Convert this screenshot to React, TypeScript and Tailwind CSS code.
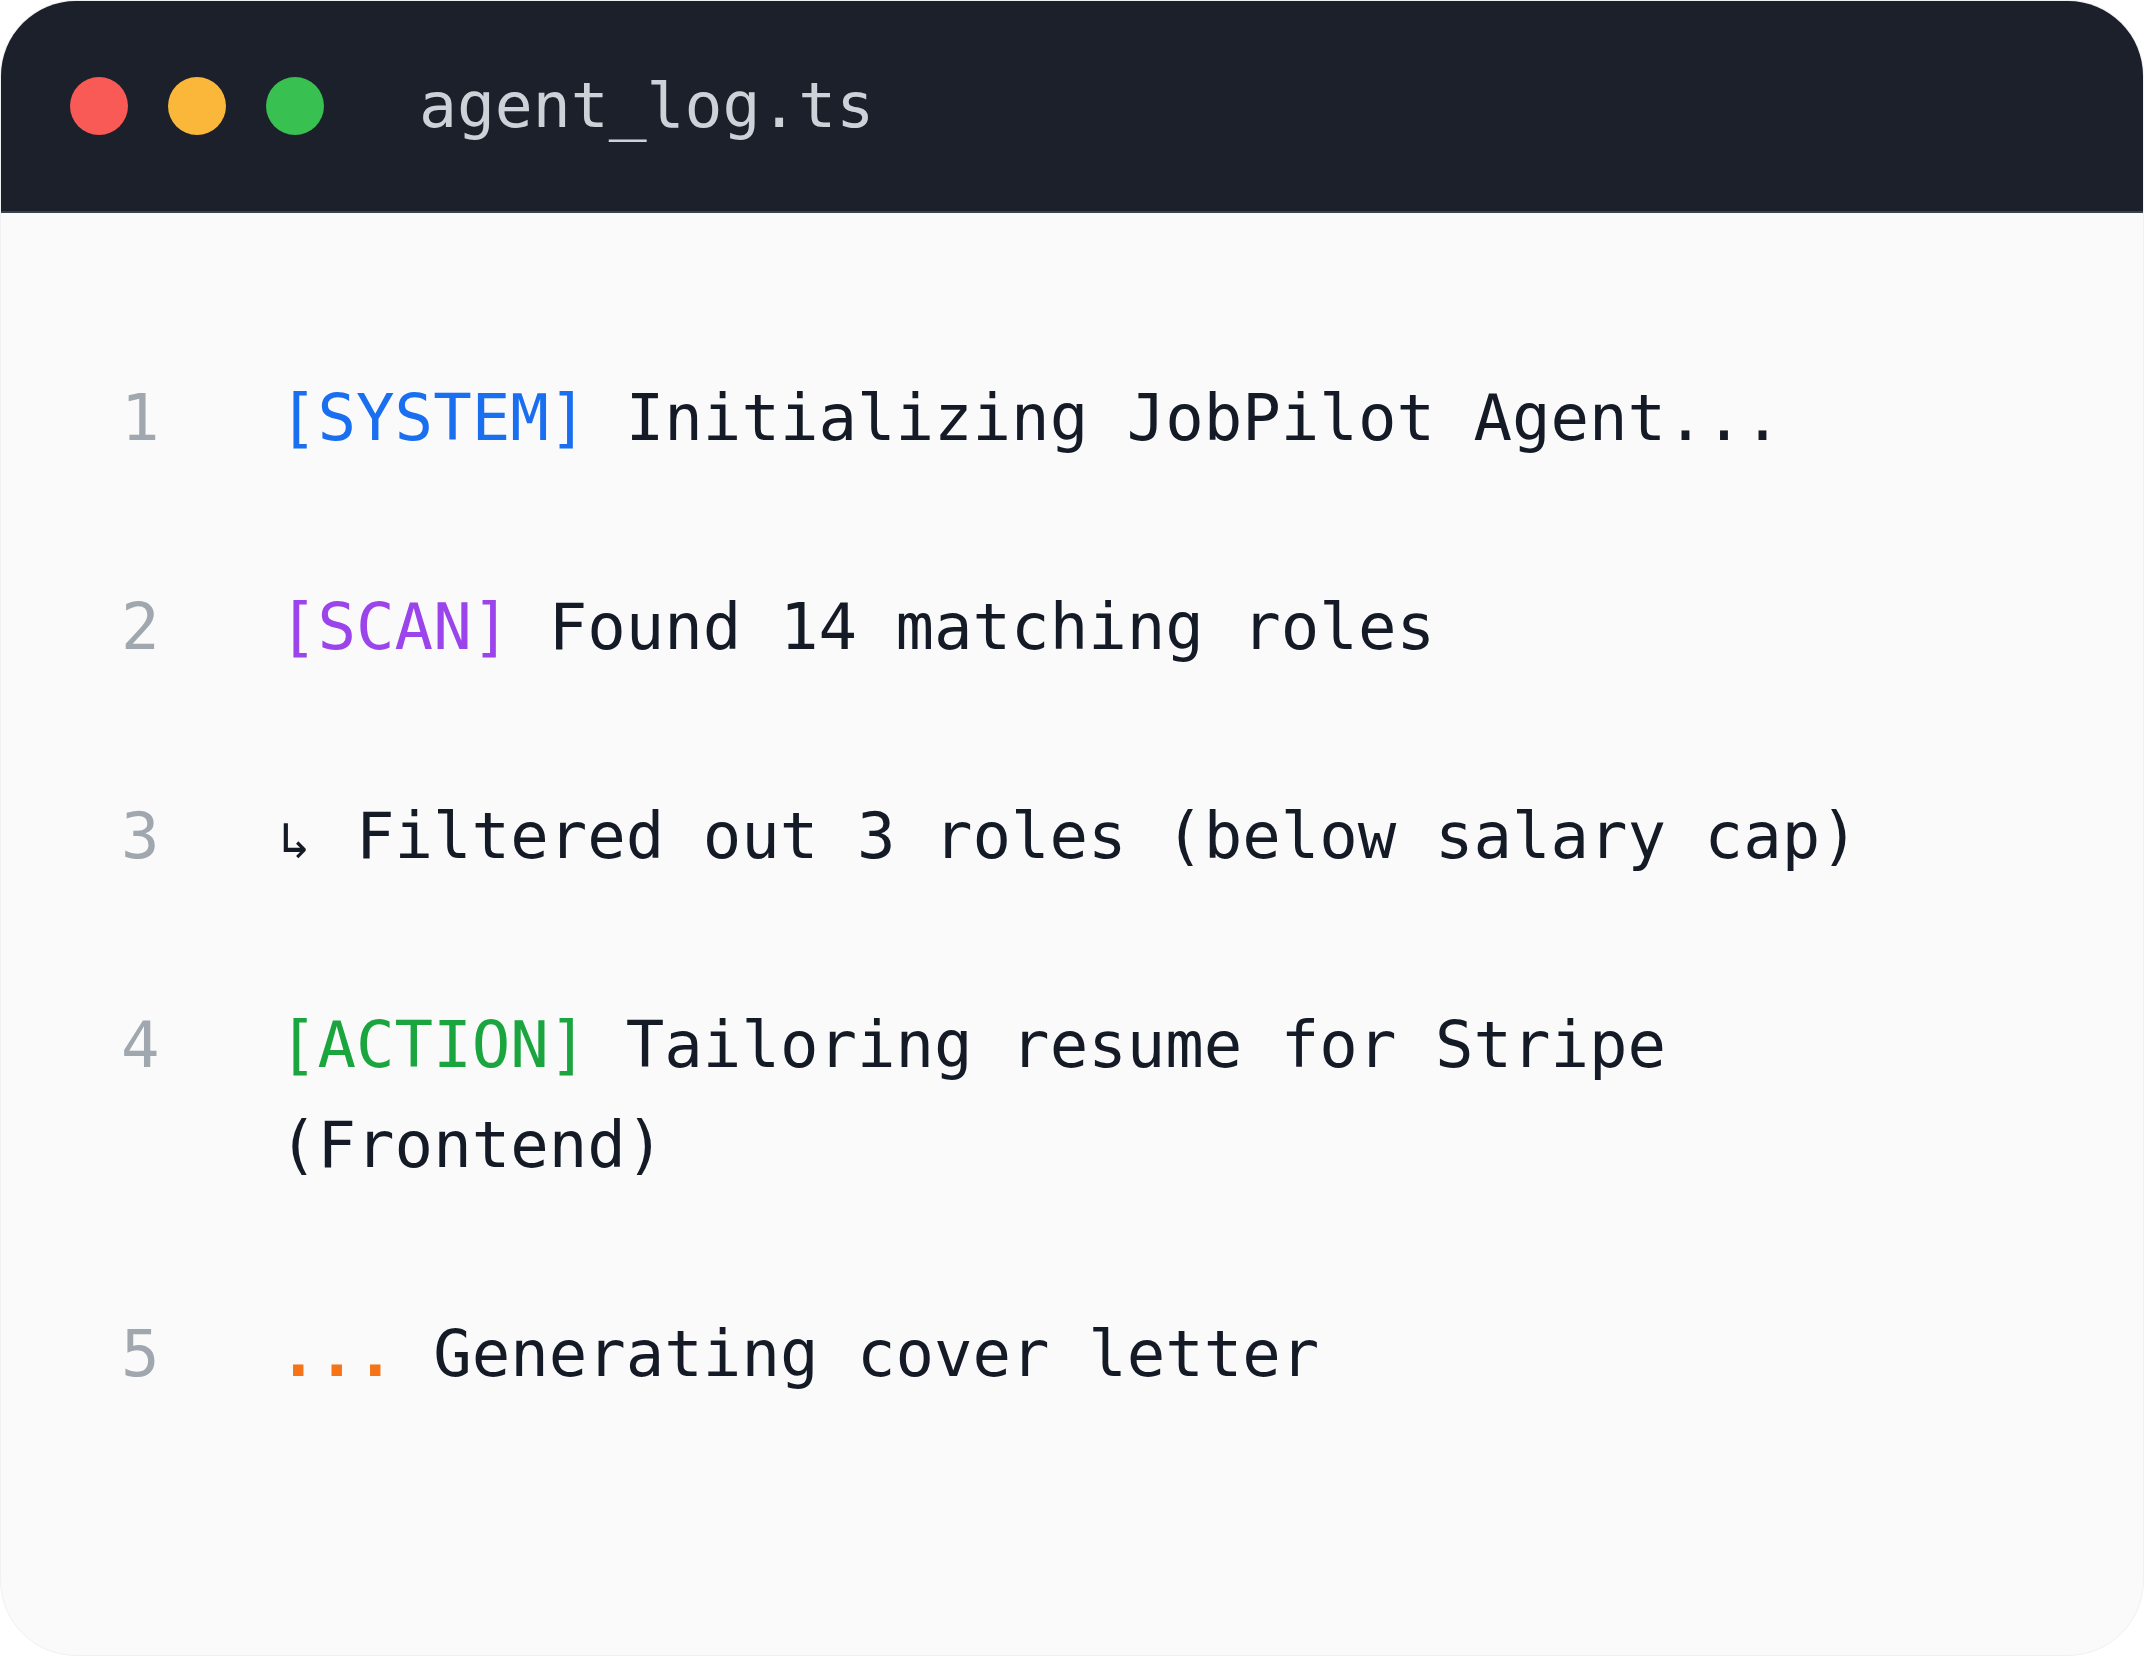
const LINES = [
  { n: 1, tag: "[SYSTEM]", tagClass: "text-[#1a6ef0]", text: " Initializing JobPilot Agent..." },
  { n: 2, tag: "[SCAN]", tagClass: "text-[#9b44ec]", text: " Found 14 matching roles" },
  { n: 3, tag: "↳", tagClass: "inline-block w-[77px] text-[52px] leading-none text-[#141a26]", text: "Filtered out 3 roles (below salary cap)" },
  { n: 4, tag: "[ACTION]", tagClass: "text-[#1aa53f]", text: " Tailoring resume for Stripe (Frontend)" },
  { n: 5, tag: "...", tagClass: "text-[#f57418] font-bold", text: " Generating cover letter" },
];

export default function App() {
  return (
    <div className="min-h-screen bg-white font-['DejaVu_Sans_Mono',monospace]">
      <div className="flex h-[1656px] w-full flex-col overflow-hidden rounded-[76px] border border-[#eef0f2] bg-[#fafafa]">
        {/* title bar */}
        <div className="flex h-[212px] shrink-0 items-center border-b-2 border-[#3b414d] bg-[#1b202b] pl-[69px]">
          <div className="flex gap-[40px]">
            <span className="h-[58px] w-[58px] rounded-full bg-[#fa5a55]" />
            <span className="h-[58px] w-[58px] rounded-full bg-[#fbb73a]" />
            <span className="h-[58px] w-[58px] rounded-full bg-[#38c050]" />
          </div>
          <span className="ml-[95px] text-[63px] text-[#cdd1d8]">agent_log.ts</span>
        </div>

        {/* log body */}
        <div className="flex flex-col gap-[109px] pl-[120px] pr-[120px] pt-[155px] text-[64px] leading-[100px] text-[#141a26]">
          {LINES.map((line) => (
            <div key={line.n} className="flex">
              <span className="w-[158px] shrink-0 text-[#a1a7ae]">{line.n}</span>
              <p className="h-fit flex-1 whitespace-pre-wrap">
                <span className={line.tagClass}>{line.tag}</span>
                {line.text}
              </p>
            </div>
          ))}
        </div>
      </div>
    </div>
  );
}
